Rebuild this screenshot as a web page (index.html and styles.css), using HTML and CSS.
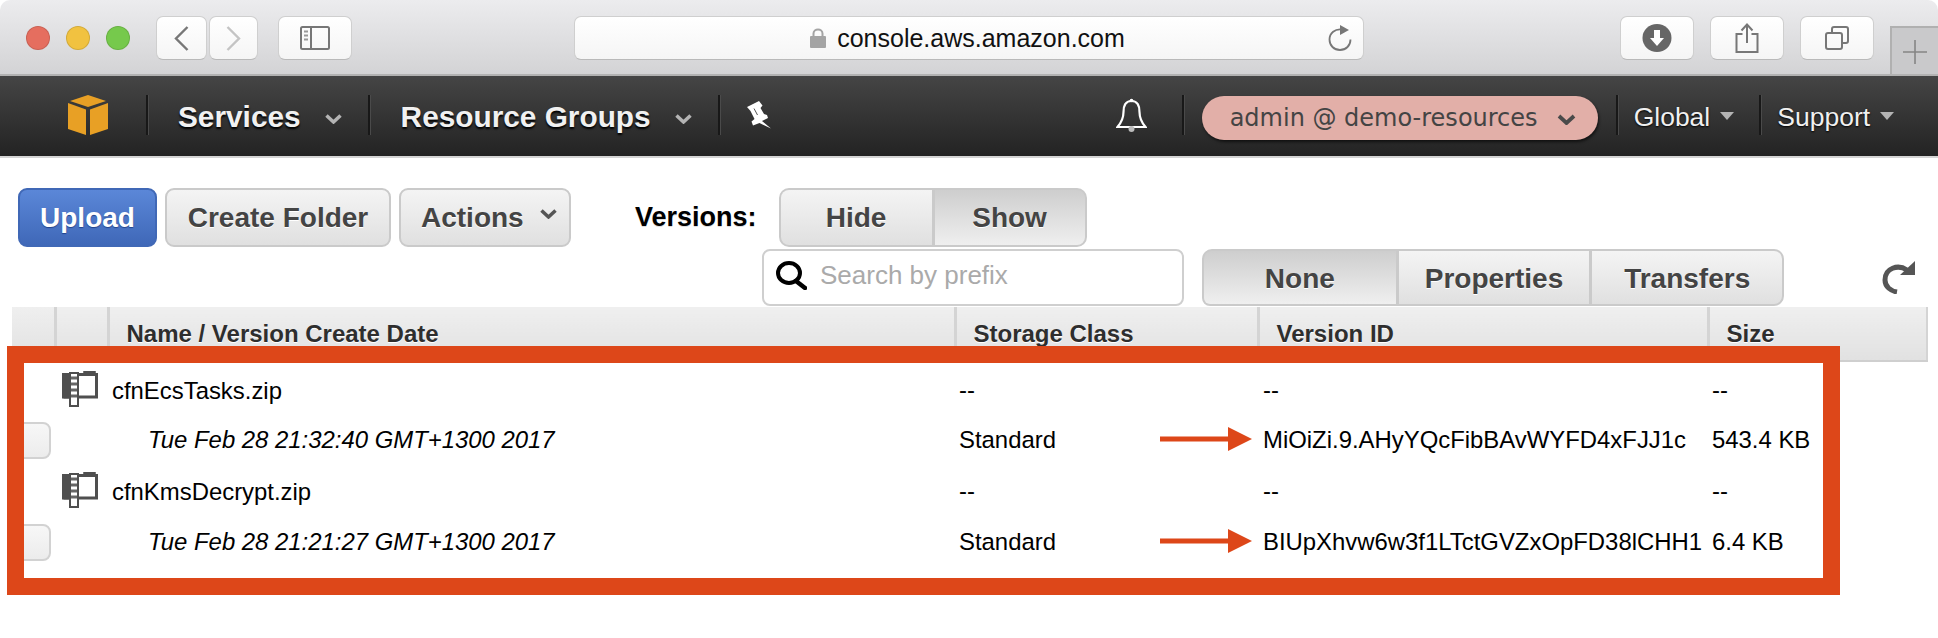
FILE: index.html
```html
<!DOCTYPE html>
<html lang="en">
<head>
<meta charset="utf-8">
<title>S3 console</title>
<link rel="stylesheet" href="styles.css">
</head>
<body>
<header class="titlebar">
  <div class="lights"><span class="light red"></span><span class="light yellow"></span><span class="light green"></span></div>
  <div class="tb back"><svg width="15" height="25" viewBox="0 0 15 25"><path d="M13.5 1 L2 12.5 L13.5 24" fill="none" stroke="#777" stroke-width="2.4"/></svg></div>
  <div class="tb forward"><svg width="15" height="25" viewBox="0 0 15 25"><path d="M1.5 1 L13 12.5 L1.5 24" fill="none" stroke="#c4c4c4" stroke-width="2.4"/></svg></div>
  <div class="tb sidebar"><svg width="30" height="24" viewBox="0 0 30 24"><rect x="1" y="1" width="28" height="22" rx="1.5" fill="none" stroke="#777" stroke-width="2"/><path d="M11 1 V23" stroke="#777" stroke-width="2"/><path d="M4 5.5 H8 M4 9.5 H8 M4 13.5 H8" stroke="#999" stroke-width="2"/></svg></div>
  <div class="tb urlbar">
    <svg class="lock" width="16" height="20" viewBox="0 0 16 20"><path d="M3.5 9 V5.5 C3.5 0 12.5 0 12.5 5.5 V9" fill="none" stroke="#a4a4a4" stroke-width="2"/><rect y="8" width="16" height="12" rx="1" fill="#a4a4a4"/></svg>
    <span class="url">console.aws.amazon.com</span>
    <svg class="reload" width="24" height="26" viewBox="0 0 24 26"><path d="M14 4.5 C7 3.5 1.5 8 1.5 14.5 C1.5 20.5 6 25 12 25 C18 25 22.5 20.5 22.5 14.5" fill="none" stroke="#777" stroke-width="1.8"/><path d="M12 0 L21 5 L12 10 Z" fill="#777"/></svg>
  </div>
  <div class="tb action first"><svg width="30" height="28" viewBox="0 0 30 28"><ellipse cx="15" cy="14" rx="14.5" ry="14" fill="#666"/><path d="M12 6 H18 V14 H22 L15 22 L8 14 H12 Z" fill="#fff"/></svg></div>
  <div class="tb action"><svg width="24" height="30" viewBox="0 0 24 30"><path d="M7.5 11 H1.5 V29 H22.5 V11 H16.5" fill="none" stroke="#777" stroke-width="2"/><path d="M12 2 V20 M6.5 7.5 L12 1.5 L17.5 7.5" fill="none" stroke="#777" stroke-width="2"/></svg></div>
  <div class="tb action"><svg width="24" height="24" viewBox="0 0 24 24"><rect x="1" y="7" width="16" height="16" rx="2" fill="none" stroke="#777" stroke-width="2"/><path d="M7 6 V3 Q7 1 9 1 H21 Q23 1 23 3 V15 Q23 17 21 17 H18" fill="none" stroke="#777" stroke-width="2"/></svg></div>
  <div class="newtab"><svg width="24" height="24" viewBox="0 0 24 24"><path d="M12 0 V24 M0 12 H24" stroke="#858585" stroke-width="1.6"/></svg></div>
</header>

<nav class="nav">
  <svg class="cube" width="40" height="40" viewBox="0 0 40 40"><path d="M20 0 L38 6 L20 12 L2 6 Z" fill="#e8a025"/><path d="M0 8 L18 14.5 V40 L0 34 Z" fill="#e8a025"/><path d="M40 8 L22 14.5 V40 L40 34 Z" fill="#e8a025"/></svg>
  <span class="sep sep-a"></span>
  <span class="nav-title services">Services</span>
  <svg class="chev chev-a" width="17" height="10" viewBox="0 0 17 10"><path d="M1.5 1.5 L8.5 8 L15.5 1.5" fill="none" stroke="#b4b4b4" stroke-width="3.5"/></svg>
  <span class="sep sep-b"></span>
  <span class="nav-title groups">Resource Groups</span>
  <svg class="chev chev-a" width="17" height="10" viewBox="0 0 17 10"><path d="M1.5 1.5 L8.5 8 L15.5 1.5" fill="none" stroke="#b4b4b4" stroke-width="3.5"/></svg>
  <span class="sep sep-c"></span>
  <svg class="pin" width="25" height="28" viewBox="0 0 25 28"><path d="M0 6 L12 0 L15.5 4.5 L13.5 7 L17 13 L20 14 L21 17 L15 20 L24 27.5 L12.500 22 L6 24.500 L4.500 20.500 L7.500 18 L3.500 10 Z" fill="#fff"/><path d="M7 7.500 L10.500 14" stroke="#555" stroke-width="1"/></svg>
  <svg class="bell" width="31" height="34" viewBox="0 0 31 34"><path d="M15.5 3 C9 3 7.5 8 7.5 14 C7.5 22 4 26 1.5 29 H29.5 C27 26 23.5 22 23.5 14 C23.5 8 22 3 15.5 3 Z" fill="none" stroke="#fff" stroke-width="2.2"/><circle cx="15.5" cy="2.5" r="1.8" fill="#fff"/><circle cx="15.5" cy="31" r="3" fill="#bbb"/></svg>
  <span class="sep sep-d"></span>
  <div class="pill"><span class="pill-text">admin @ demo-resources</span><svg class="pill-chev" width="19" height="11" viewBox="0 0 19 11"><path d="M2 2 L9.5 9 L17 2" fill="none" stroke="#4a4a4a" stroke-width="3.8"/></svg></div>
  <span class="sep sep-e"></span>
  <span class="nav-link global">Global</span>
  <svg class="mini" width="14" height="8" viewBox="0 0 14 8"><path d="M0 0 H14 L7 8 Z" fill="#b4b4b4"/></svg>
  <span class="sep sep-f"></span>
  <span class="nav-link support">Support</span>
  <svg class="mini" width="14" height="8" viewBox="0 0 14 8"><path d="M0 0 H14 L7 8 Z" fill="#b4b4b4"/></svg>
</nav>

<main class="main">
  <div class="toolbar">
    <button class="btn upload">Upload</button>
    <button class="btn create">Create Folder</button>
    <button class="btn actions">Actions<svg class="actions-chev" width="17" height="10" viewBox="0 0 17 10"><path d="M1.5 1.5 L8.5 8 L15.5 1.5" fill="none" stroke="#555" stroke-width="3.5"/></svg></button>
    <span class="versions-label">Versions:</span>
    <div class="segment versions"><span class="seg hide">Hide</span><span class="seg show pressed">Show</span></div>
  </div>
  <div class="toolbar-second">
    <div class="search">
      <svg width="31" height="29" viewBox="0 0 31 29"><ellipse cx="13" cy="12" rx="11" ry="10" fill="none" stroke="#000" stroke-width="4"/><path d="M20 20 L29 27" stroke="#000" stroke-width="4.5" stroke-linecap="round"/></svg>
      <span class="placeholder">Search by prefix</span>
    </div>
    <div class="segment panels"><span class="seg none pressed">None</span><span class="seg properties">Properties</span><span class="seg transfers">Transfers</span></div>
    <svg class="refresh" width="33" height="33" viewBox="0 0 33 33"><path d="M25 9 C16 3 3 7 3 19 C3 26 9 30 15 31" fill="none" stroke="#555" stroke-width="5"/><path d="M18 14 H33 V0 Z" fill="#555"/></svg>
  </div>

  <table class="objects">
    <colgroup><col class="c1"><col class="c2"><col class="c3"><col class="c4"><col class="c5"><col class="c6"></colgroup>
    <thead>
      <tr><th></th><th></th><th>Name / Version Create Date</th><th>Storage Class</th><th>Version ID</th><th>Size</th></tr>
    </thead>
    <tbody>
      <tr class="file-row">
        <td></td>
        <td colspan="2"><div class="file"><svg width="36" height="36" viewBox="0 0 36 36"><use href="#zip"/></svg><span>cfnEcsTasks.zip</span></div></td>
        <td class="storage">--</td><td class="vid">--</td><td class="size">--</td>
      </tr>
      <tr class="version-row">
        <td><span class="stub"></span></td><td></td>
        <td class="date">Tue Feb 28 21:32:40 GMT+1300 2017</td>
        <td class="storage">Standard</td><td class="vid">MiOiZi.9.AHyYQcFibBAvWYFD4xFJJ1c</td><td class="size">543.4 KB</td>
      </tr>
      <tr class="file-row">
        <td></td>
        <td colspan="2"><div class="file"><svg width="36" height="36" viewBox="0 0 36 36"><use href="#zip"/></svg><span>cfnKmsDecrypt.zip</span></div></td>
        <td class="storage">--</td><td class="vid">--</td><td class="size">--</td>
      </tr>
      <tr class="version-row">
        <td><span class="stub"></span></td><td></td>
        <td class="date">Tue Feb 28 21:21:27 GMT+1300 2017</td>
        <td class="storage">Standard</td><td class="vid">BIUpXhvw6w3f1LTctGVZxOpFD38lCHH1</td><td class="size">6.4 KB</td>
      </tr>
    </tbody>
  </table>
</main>

<div class="highlight">
  <svg class="arrow arrow-one" width="92" height="24" viewBox="0 0 92 24"><path d="M0 9.5 H68 V0 L92 12 L68 24 V14.5 H0 Z" fill="#dd4719"/></svg>
  <svg class="arrow arrow-two" width="92" height="24" viewBox="0 0 92 24"><path d="M0 9.5 H68 V0 L92 12 L68 24 V14.5 H0 Z" fill="#dd4719"/></svg>
</div>

<svg class="defs" width="0" height="0">
  <defs>
    <g id="zip">
      <path d="M22 2.5 V0.5 H33 V2.5" fill="#4f4f4f" stroke="#4f4f4f" stroke-width="1.5"/>
      <path d="M3 3.5 H34.5 V26 H3 Z" fill="#fff" stroke="#4f4f4f" stroke-width="3"/>
      <rect x="0" y="2" width="8" height="25.5" fill="#4f4f4f"/>
      <rect x="8" y="2" width="8" height="33" fill="#fff" stroke="#4f4f4f" stroke-width="2"/>
      <path d="M9 7 H15 M9 13 H15 M9 19 H15 M9 25 H15" stroke="#666" stroke-width="3"/>
    </g>
  </defs>
</svg>
</body>
</html>
```

FILE: styles.css
```css
* { box-sizing: border-box; }

html, body { margin: 0; padding: 0; }

body {
  position: relative;
  width: 1938px;
  height: 638px;
  overflow: hidden;
  background: #fff;
  font-family: "Liberation Sans", Arial, sans-serif;
  color: #000;
}

/* Browser chrome */
.titlebar {
  display: flex;
  align-items: flex-start;
  height: 76px;
  padding-top: 16px;
  background: linear-gradient(#ececee, #d3d3d5);
  border-bottom: 2px solid #b2b2b2;
  border-radius: 10px 10px 0 0;
}

.lights { display: flex; gap: 16px; margin: 10px 0 0 26px; }
.light { width: 24px; height: 24px; border-radius: 50%; border: 1px solid rgba(0, 0, 0, .12); }
.red { background: #e56e5f; }
.yellow { background: #f1c240; }
.green { background: #76c94c; }

.tb {
  display: flex;
  align-items: center;
  justify-content: center;
  height: 44px;
  background: linear-gradient(#fff, #f5f5f5);
  border: 1px solid #cfcfcf;
  border-bottom-color: #b9b9b9;
  border-radius: 7px;
}
.back { width: 51px; margin-left: 26px; }
.forward { width: 49px; margin-left: 2px; }
.sidebar { width: 74px; margin-left: 20px; }
.urlbar { position: relative; width: 790px; margin-left: 222px; gap: 11px; padding-right: 3px; }
.url { font-size: 25px; color: #111; }
.reload { position: absolute; right: 11px; top: 8px; }
.action { width: 74px; margin-left: 16px; }
.first { margin-left: 256px; }
.newtab {
  display: flex;
  align-items: center;
  justify-content: center;
  width: 48px;
  height: 48px;
  margin: 10px 0 0 16px;
  padding-top: 2px;
  background: #c9c9cb;
  border-left: 2px solid #b0b0b0;
  border-top: 2px solid #b0b0b0;
}

/* AWS navigation */
.nav {
  display: flex;
  align-items: center;
  height: 82px;
  padding-bottom: 2px;
  background: linear-gradient(#454545, #232323);
  border-bottom: 2px solid #d4d4d4;
  color: #fff;
}
.cube { margin-left: 68px; }
.sep { width: 2px; height: 40px; background: #181818; box-shadow: 1px 0 0 #4a4a4a; }
.sep-a { margin-left: 38px; }
.sep-b { margin-left: 26px; }
.sep-c { margin-left: 26px; }
.sep-d { margin-left: 35px; }
.sep-e { margin-left: 18px; }
.sep-f { margin-left: 25px; }

.nav-title {
  font-size: 29.8px;
  font-weight: 700;
  color: #f1f1f1;
  text-shadow: 0 2px 2px #000;
  white-space: nowrap;
  margin-top: 4px;
}
.services { margin-left: 30px; }
.groups { margin-left: 31px; }
.chev-a { margin-left: 24px; margin-top: 8px; }
.pin { margin-left: 27px; margin-top: -1px; }
.bell { margin-left: 344px; margin-top: -1px; }

.pill {
  display: flex;
  align-items: center;
  width: 396px;
  height: 44px;
  margin: 5px 0 0 18px;
  padding-left: 28px;
  background: #e2afa8;
  border-radius: 22px;
  box-shadow: 1px 2px 3px rgba(0, 0, 0, .6);
}
.pill-text { font-family: "DejaVu Sans", Verdana, sans-serif; font-size: 24px; color: #444; white-space: nowrap; }
.pill-chev { margin-left: 19px; margin-top: 3px; }

.nav-link { font-size: 26.5px; margin-top: 4px; color: #f0f0f0; text-shadow: 0 1px 2px #000; }
.global { margin-left: 16px; }
.support { margin-left: 16px; }
.mini { margin-left: 10px; margin-top: 2px; }

/* Toolbar */
.toolbar {
  display: flex;
  align-items: center;
  padding: 30px 0 0 18px;
}
.btn {
  height: 59px;
  padding: 0;
  font-family: inherit;
  font-size: 28px;
  font-weight: 700;
  color: #444;
  text-shadow: 0 1px 0 #fff;
  background: linear-gradient(#f4f4f4, #e0e0e0);
  border: 2px solid #cacaca;
  border-radius: 9px;
}
.upload {
  width: 139px;
  color: #fff;
  text-shadow: 0 1px 1px #22438a;
  background: linear-gradient(#5b87d8, #3f68b8);
  border-color: #4068b6;
}
.create { width: 226px; margin-left: 8px; }
.actions {
  display: flex;
  align-items: center;
  width: 172px;
  margin-left: 8px;
  padding-left: 20px;
}
.actions-chev { margin-left: 16px; margin-top: -8px; }
.versions-label { margin-left: 64px; font-size: 27px; font-weight: 700; text-shadow: 0 1px 0 #ddd; }

.segment {
  display: flex;
  overflow: hidden;
  background: #cacaca;
  border: 2px solid #cacaca;
  border-radius: 10px;
}
.seg {
  display: flex;
  align-items: center;
  justify-content: center;
  font-size: 28px;
  font-weight: 700;
  color: #444;
  text-shadow: 0 1px 0 #fff;
  background: linear-gradient(#f4f4f4, #e0e0e0);
}
.seg + .seg { margin-left: 3px; }
.pressed { background: linear-gradient(#cecece, #efefef); }

.versions { width: 308px; height: 59px; margin-left: 22px; }
.hide { width: 151px; }
.show { width: 150px; }

.toolbar-second {
  display: flex;
  align-items: center;
  height: 57px;
  margin-top: 2px;
  padding-left: 762px;
}
.search {
  display: flex;
  align-items: center;
  width: 422px;
  height: 57px;
  padding: 0 0 4px 12px;
  gap: 13px;
  background: #fff;
  border: 2px solid #cfcfcf;
  border-radius: 8px;
}
.placeholder { font-size: 26px; color: #aaa; }
.panels { width: 582px; height: 57px; margin-left: 18px; border-bottom-left-radius: 8px; }
.none { width: 192px; }
.properties { width: 191px; }
.transfers { width: 190px; }
.panels .seg { padding-top: 2px; }
.refresh { margin-left: 98px; margin-top: -1px; }

/* Table */
.objects {
  width: 1915px;
  margin: 1px 0 0 12px;
  table-layout: fixed;
  border-collapse: collapse;
}
.c1 { width: 43px; }
.c2 { width: 53px; }
.c3 { width: 847px; }
.c4 { width: 303px; }
.c5 { width: 450px; }
.c6 { width: 219px; }

.objects th {
  height: 54px;
  padding: 0 0 0 17px;
  text-align: left;
  vertical-align: middle;
  font-size: 24px;
  font-weight: 700;
  color: #2e2e2e;
  white-space: nowrap;
  text-shadow: 0 1px 0 #fff;
  background: linear-gradient(#efefef, #e1e1e1);
  border-left: 3px solid #d4d4d4;
  border-bottom: 2px solid #cfcfcf;
}
.objects th:first-child { border-left: 0; }
.objects th:last-child { border-right: 2px solid #d4d4d4; }

.objects td {
  padding: 0;
  font-size: 23.9px;
  white-space: nowrap;
  vertical-align: middle;
}
.file-row td { height: 56px; }
.version-row td { height: 46px; }

.file { display: flex; align-items: center; gap: 14px; padding-left: 7px; margin-top: -2px; }
.file span { margin-top: 4px; }
.date { font-style: italic; }
.objects .date { padding-left: 40px; }
.objects .storage { padding-left: 4px; }
.objects .vid { padding-left: 5px; }
.objects .size { padding-left: 4px; }

.stub {
  display: block;
  width: 39px;
  height: 37px;
  background: linear-gradient(#f7f7f7, #ececec);
  border: 2px solid #d2d2d2;
  border-radius: 8px;
}

/* Annotation laid over the screenshot */
.highlight {
  position: absolute;
  left: 7px;
  top: 346px;
  width: 1833px;
  height: 249px;
  border: 17px solid #dd4719;
  pointer-events: none;
}
.arrow { position: absolute; left: 1136px; }
.arrow-one { top: 64px; }
.arrow-two { top: 166px; }

.defs { position: absolute; }
```
